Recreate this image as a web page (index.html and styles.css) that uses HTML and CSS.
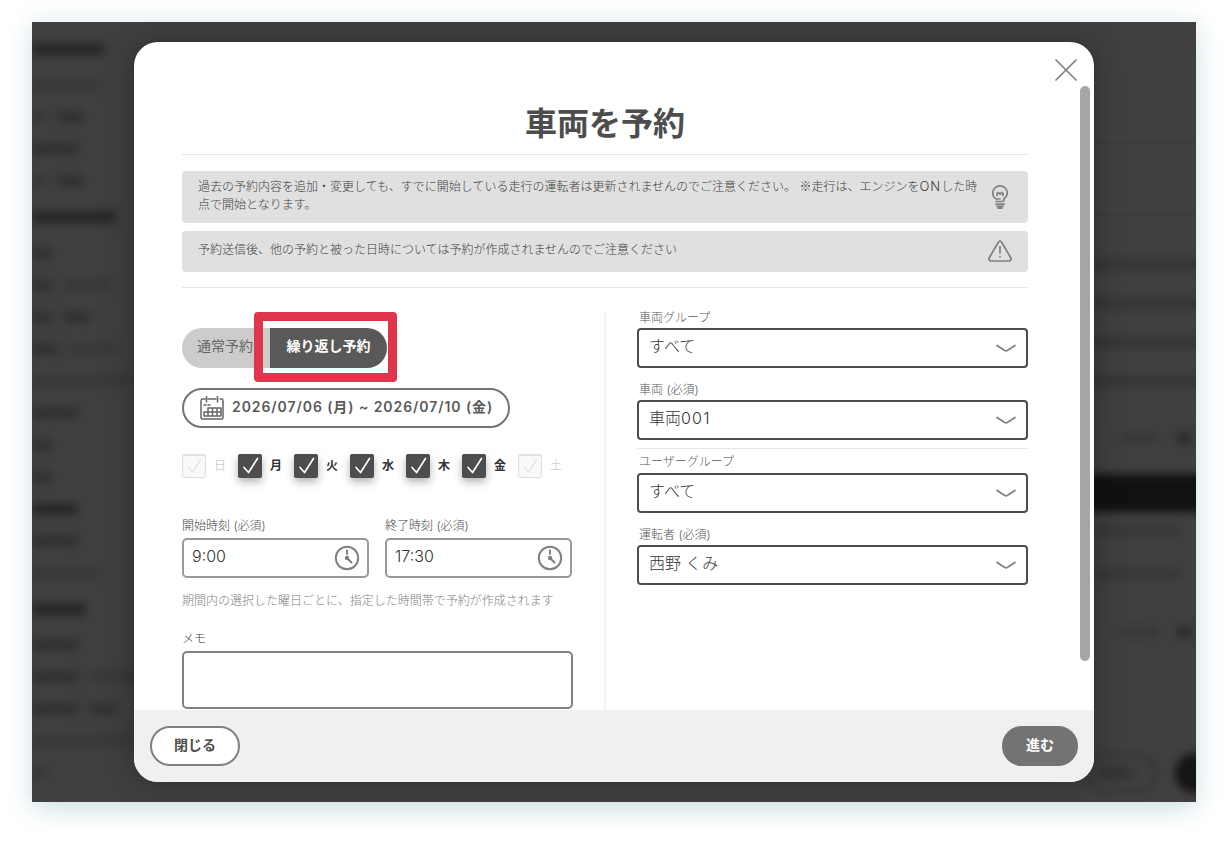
FILE: index.html
```html
<!DOCTYPE html>
<html lang="ja">
<head>
    <meta charset="UTF-8">
    <meta name="viewport" content="width=device-width, initial-scale=1.0">
    <title>車両を予約</title>
    <link rel="stylesheet" href="styles.css">
</head>
<body>
    <div class="screen">

        <!-- Blurred page behind the dialog -->
        <div class="backdrop">
            <div class="side">
                <div class="head"><i class="w72"></i></div>
                <div class="item pale"><i class="w66"></i></div>
                <div class="item"><i class="w14 thin"></i><i class="w26"></i></div>
                <div class="item"><i class="w46"></i></div>
                <div class="item"><i class="w14 thin"></i><i class="w26"></i></div>
                <div class="head"><i class="w84"></i></div>
                <div class="item"><i class="w20"></i></div>
                <div class="item"><i class="w20"></i><i class="w46 thin"></i></div>
                <div class="item"><i class="w20"></i><i class="w26"></i></div>
                <div class="item"><i class="w26"></i><i class="w46 thin"></i></div>
                <div class="item pale"><i class="w100"></i></div>
                <div class="item"><i class="w46"></i></div>
                <div class="item"><i class="w20"></i></div>
                <div class="item"><i class="w20"></i></div>
                <div class="item dark"><i class="w46"></i></div>
                <div class="item"><i class="w46"></i></div>
                <div class="item pale"><i class="w66"></i></div>
                <div class="head"><i class="w54"></i></div>
                <div class="item"><i class="w46"></i></div>
                <div class="item"><i class="w46"></i><i class="w46 thin"></i></div>
                <div class="item"><i class="w46"></i><i class="w26"></i></div>
                <div class="item pale"><i class="w100"></i></div>
                <div class="item pale"><i class="w14"></i></div>
            </div>
            <div class="page">
                <div class="line"></div>
                <div class="line second"></div>
                <div class="rows"><i></i><i></i><i></i><i></i></div>
                <div class="cells"><i class="w36"></i><i class="w14 dot"></i></div>
                <div class="band"></div>
                <div class="cells pale"><i class="w84"></i></div>
                <div class="cells pale"><i class="w84"></i></div>
                <div class="cells last"><i class="w36"></i><i class="w14 dot"></i></div>
                <div class="actions"><span class="outline"><i class="w36"></i></span><span class="solid"></span></div>
            </div>
        </div>
        <div class="shade"></div>

        <!-- Dialog -->
        <div class="modal">
            <button class="close" aria-label="閉じる">
                <svg width="24" height="24" viewBox="0 0 24 24"><path d="M2 2L22 22M22 2L2 22"/></svg>
            </button>
            <div class="scrollbar"></div>

            <div class="content">
                <h1>車両を予約</h1>

                <div class="notices">
                    <div class="notice">
                        <p>過去の予約内容を追加・変更しても、すでに開始している走行の運転者は更新されませんのでご注意ください。 <span class="kome">※</span>走行は、エンジンを<span class="on">ON</span>した時<br>点で開始となります。</p>
                        <svg class="bulb" width="24" height="26" viewBox="0 0 24 26">
                            <path d="M8 17.500h6.500q1.500 0 1.500-1.500v-1.500c2-1.200 3.200-3.200 3.200-5.500a7.200 7.200 0 0 0-14.400 0c0 3 1.200 5 3.700 6h3.500"/>
                            <path d="M9 11.500v-2l1.500-1 1.500 1.800 1.500-1.800 1.500 1v2"/>
                            <path d="M8 20.200h8M9 22.300h6M10.300 24.200h3.400"/>
                        </svg>
                    </div>
                    <div class="notice small">
                        <p>予約送信後、他の予約と被った日時については予約が作成されませんのでご注意ください</p>
                        <svg width="24" height="24" viewBox="0 0 24 24">
                            <path d="M10.300 2.200L1.300 17.700c-.8 1.600 0 3.300 1.800 3.300h17.800c1.800 0 2.600-1.700 1.800-3.300L13.700 2.200c-.8-1.500-2.600-1.500-3.400 0z"/>
                            <path class="mark" d="M12 6v7.500M12 15.800v1.700"/>
                        </svg>
                    </div>
                </div>

                <div class="columns">
                    <div class="left">
                        <div class="toggle">
                            <span class="normal">通常予約</span>
                            <span class="repeat">繰り返し予約</span>
                            <div class="highlight"></div>
                        </div>

                        <div class="period">
                            <svg width="24" height="24" viewBox="0 0 24 24">
                                <path d="M5 3H2.500Q1 3 1 4.500v17Q1 23 2.500 23h19q1.500 0 1.500-1.500v-17Q23 3 21.500 3H20M8 3h8M6.500 0v6M17.500 0v6M4 9h2M8 9h2"/>
                                <path d="M8 12h13v8H4v-4h17M8 12v8M12.500 12v8M17 12v8"/>
                            </svg>
                            <span>2026/07/06 (月) ~ 2026/07/10 (金)</span>
                        </div>

                        <div class="days">
                            <label class="day off"><span class="check"><svg viewBox="0 0 24 24"><path d="M6 13.500L10.500 18.500L19.500 4.500"/></svg></span>日</label>
                            <label class="day"><span class="check"><svg viewBox="0 0 24 24"><path d="M6 13.500L10.500 18.500L19.500 4.500"/></svg></span>月</label>
                            <label class="day"><span class="check"><svg viewBox="0 0 24 24"><path d="M6 13.500L10.500 18.500L19.500 4.500"/></svg></span>火</label>
                            <label class="day"><span class="check"><svg viewBox="0 0 24 24"><path d="M6 13.500L10.500 18.500L19.500 4.500"/></svg></span>水</label>
                            <label class="day"><span class="check"><svg viewBox="0 0 24 24"><path d="M6 13.500L10.500 18.500L19.500 4.500"/></svg></span>木</label>
                            <label class="day"><span class="check"><svg viewBox="0 0 24 24"><path d="M6 13.500L10.500 18.500L19.500 4.500"/></svg></span>金</label>
                            <label class="day off"><span class="check"><svg viewBox="0 0 24 24"><path d="M6 13.500L10.500 18.500L19.500 4.500"/></svg></span>土</label>
                        </div>

                        <div class="times">
                            <div class="field">
                                <label>開始時刻 <small>(必須)</small></label>
                                <div class="box time">
                                    <span>9:00</span>
                                    <svg width="26" height="26" viewBox="0 0 26 26"><circle cx="13" cy="13" r="11.200"/><path d="M13 5.500v3.500M13 13l4.500 4.500"/><circle class="hub" cx="13" cy="13" r="2.200"/></svg>
                                </div>
                            </div>
                            <div class="field">
                                <label>終了時刻 <small>(必須)</small></label>
                                <div class="box time">
                                    <span>17:30</span>
                                    <svg width="26" height="26" viewBox="0 0 26 26"><circle cx="13" cy="13" r="11.200"/><path d="M13 5.500v3.500M13 13l4.500 4.500"/><circle class="hub" cx="13" cy="13" r="2.200"/></svg>
                                </div>
                            </div>
                        </div>

                        <p class="hint">期間内の選択した曜日ごとに、指定した時間帯で予約が作成されます</p>

                        <div class="field memo">
                            <label for="memo">メモ</label>
                            <textarea id="memo"></textarea>
                        </div>
                    </div>

                    <div class="right">
                        <div class="field">
                            <label>車両グループ</label>
                            <div class="box select"><span>すべて</span><svg width="20" height="10" viewBox="0 0 20 10"><path d="M1 2.500L8.800 7.500Q10 8.200 11.200 7.500L19 2.500"/></svg></div>
                        </div>
                        <div class="field">
                            <label>車両 <small>(必須)</small></label>
                            <div class="box select"><span>車両<b>001</b></span><svg width="20" height="10" viewBox="0 0 20 10"><path d="M1 2.500L8.800 7.500Q10 8.200 11.200 7.500L19 2.500"/></svg></div>
                        </div>
                        <div class="field ruled">
                            <label>ユーザーグループ</label>
                            <div class="box select"><span>すべて</span><svg width="20" height="10" viewBox="0 0 20 10"><path d="M1 2.500L8.800 7.500Q10 8.200 11.200 7.500L19 2.500"/></svg></div>
                        </div>
                        <div class="field">
                            <label>運転者 <small>(必須)</small></label>
                            <div class="box select"><span>西野 くみ</span><svg width="20" height="10" viewBox="0 0 20 10"><path d="M1 2.500L8.800 7.500Q10 8.200 11.200 7.500L19 2.500"/></svg></div>
                        </div>
                    </div>
                </div>
            </div>

            <div class="footer">
                <button class="cancel">閉じる</button>
                <button class="next">進む</button>
            </div>
        </div>
    </div>
</body>
</html>
```
FILE: styles.css
```css
* {
    box-sizing: border-box;
}
body {
    margin: 0;
    padding: 22px 32px 42px;
    background: white;
    color: #404040;
    font-family: Inter, "Noto Sans CJK JP", sans-serif;
    font-size: 12px;
    font-weight: 300;
    line-height: 18px;
}
h1, p {
    margin: 0;
}
button {
    font-family: inherit;
}
svg {
    display: block;
    flex: none;
    fill: none;
    stroke: #808080;
    stroke-width: 1.7;
    stroke-linecap: round;
    stroke-linejoin: round;
}
.screen {
    position: relative;
    width: 1164px;
    height: 780px;
    padding: 20px 102px;
    box-shadow: 0 0 24px rgba(120, 170, 190, 0.22), 0 12px 24px -4px rgba(120, 175, 185, 0.25);
}

/* page behind the dialog */
.backdrop {
    position: absolute;
    inset: 0;
    display: flex;
    overflow: hidden;
    background: #404040;
}
.backdrop i {
    display: block;
    height: 10px;
    background: #2e2e2e;
    filter: blur(5px);
}
.backdrop .thin, .backdrop .pale i {
    background: #363636;
}
.backdrop .dark i {
    background: #222;
}
.side {
    flex: none;
    width: 133px;
    padding-top: 7px;
    overflow: hidden;
}
.head, .item {
    display: flex;
    align-items: center;
    gap: 12px;
    height: 32px;
}
.head {
    height: 40px;
}
.head i {
    height: 12px;
    background: #252525;
}
.w14 { width: 14px; }
.w20 { width: 20px; }
.w26 { width: 26px; }
.w36 { width: 36px; }
.w46 { width: 46px; }
.w54 { width: 54px; }
.w66 { width: 66px; }
.w72 { width: 72px; }
.w84 { width: 84px; }
.w100 { width: 100px; }
.page {
    flex: 1;
    padding: 119px 0 0 920px;
}
.line {
    height: 2px;
    margin-bottom: 70px;
    background: #3c3c3c;
}
.second {
    margin-bottom: 45px;
}
.rows {
    display: flex;
    flex-direction: column;
    gap: 30px;
}
.rows i {
    height: 9px;
    background: #323232;
}
.cells {
    display: flex;
    align-items: center;
    gap: 20px;
    height: 43px;
    padding-left: 36px;
}
.rows + .cells {
    height: 40px;
    margin-top: 32px;
}
.cells.pale {
    padding-left: 10px;
}
.cells i {
    flex: none;
    background: #373737;
}
.cells .dot {
    background: #262626;
}
.band {
    height: 38px;
    margin: 16px -20px 0 0;
    background: #111;
    filter: blur(4px);
}
.band + .pale {
    margin-top: -3px;
}
.cells.last {
    margin-top: 15px;
}
.actions {
    display: flex;
    gap: 18px;
    margin-top: 100px;
}
.outline {
    display: flex;
    flex: none;
    align-items: center;
    width: 72px;
    height: 40px;
    padding-left: 8px;
    border: 3px solid #343434;
    border-radius: 20px;
    filter: blur(3px);
}
.solid {
    flex: none;
    width: 60px;
    height: 40px;
    border-radius: 20px;
    background: #151515;
    filter: blur(4px);
}
.shade {
    position: absolute;
    inset: 0;
    overflow: hidden;
}
.shade::before {
    content: "";
    position: absolute;
    inset: 20px 102px;
    border-radius: 24px;
    box-shadow: 0 0 32px rgba(0, 0, 0, 0.3);
}

/* dialog */
.modal {
    position: relative;
    display: flex;
    flex-direction: column;
    width: 960px;
    height: 740px;
    overflow: hidden;
    border-radius: 24px;
    background: white;
}
.close {
    position: absolute;
    top: 16px;
    right: 16px;
    padding: 0;
    border: none;
    background: none;
}
.scrollbar {
    position: absolute;
    top: 44px;
    right: 4px;
    width: 10px;
    height: 575px;
    border-radius: 5px;
    background: #a6a6a6;
}
.content {
    height: 668px;
    padding: 56px 66px 0 48px;
    overflow: hidden;
}
h1 {
    height: 57px;
    border-bottom: 1px solid #e6e6e6;
    color: #4d4d4d;
    font-size: 32px;
    font-weight: 700;
    line-height: 51px;
    text-align: center;
}
.notices {
    display: flex;
    flex-direction: column;
    gap: 8px;
    height: 133px;
    padding-top: 16px;
    border-bottom: 1px solid #e6e6e6;
}
.notice {
    display: flex;
    align-items: center;
    justify-content: space-between;
    height: 52px;
    padding: 0 16px;
    border-radius: 4px;
    background: #e0e0e0;
}
.notice p {
    padding-bottom: 3px;
    white-space: nowrap;
}
.kome {
    font-family: "Noto Sans CJK JP", sans-serif;
}
.on {
    font-size: 13px;
    letter-spacing: 1px;
}
.notice.small {
    height: 41px;
}
.mark {
    stroke-linecap: butt;
}
.columns {
    display: flex;
    gap: 32px;
    padding-top: 24px;
}
.left {
    flex: none;
    width: 390px;
    padding-top: 16px;
}
.right {
    flex: 1;
    height: 410px;
    padding-left: 31px;
    border-left: 2px solid #f2f2f2;
}

/* normal / repeat switch */
.toggle {
    position: relative;
    display: flex;
    width: 205px;
    height: 40px;
    border-radius: 20px;
    font-size: 14px;
    line-height: 36px;
}
.normal {
    width: 88px;
    padding-left: 15px;
    border-radius: 20px 0 0 20px;
    background: #ccc;
    color: #666;
    font-weight: 400;
}
.repeat {
    flex: 1;
    border-radius: 0 20px 20px 0;
    background: #595959;
    color: white;
    font-weight: 700;
    text-align: center;
}
.highlight {
    position: absolute;
    top: -16px;
    left: 72px;
    width: 143px;
    height: 70px;
    border: 9px solid #e0364b;
    border-radius: 4px;
}
.period {
    display: flex;
    align-items: center;
    gap: 8px;
    width: 328px;
    height: 40px;
    margin-top: 20px;
    padding-left: 16px;
    border: 2px solid #737373;
    border-radius: 20px;
    color: #595959;
    font-size: 14px;
    font-weight: 600;
    letter-spacing: 0.93px;
    white-space: nowrap;
}
.period svg {
    stroke: #666;
    stroke-width: 1.5;
}
.period span {
    padding-bottom: 2px;
}
.days {
    display: flex;
    margin-top: 26px;
}
.day {
    display: flex;
    flex: none;
    gap: 8px;
    width: 56px;
    height: 24px;
    color: #333;
    font-weight: 700;
    line-height: 23px;
}
.check {
    width: 24px;
    height: 24px;
    border-radius: 2px;
    background: #4d4d4d;
    box-shadow: 0 4px 8px rgba(0, 0, 0, 0.3);
}
.check svg {
    stroke: white;
}
.off {
    color: #bfbfbf;
    font-weight: 300;
}
.off .check {
    border: 1px solid #e0e0e0;
    background: #fafafa;
    box-shadow: inset 0 1px 1px #e0e0e0;
}
.off .check svg {
    stroke: #e6e6e6;
}

/* form fields */
.field label {
    display: block;
    height: 22px;
    line-height: 20px;
}
.field small {
    color: #595959;
    font-size: 12px;
}
.box {
    display: flex;
    align-items: center;
    justify-content: space-between;
    height: 40px;
    border: 2px solid #4d4d4d;
    border-radius: 4px;
    color: #333;
    font-size: 16px;
    white-space: nowrap;
}
.box span {
    padding-bottom: 4px;
}
.box b {
    font-weight: 300;
    letter-spacing: 1.2px;
}
.times {
    display: flex;
    gap: 16px;
    margin-top: 38px;
}
.times .field {
    flex: 1;
}
.time {
    padding: 0 7px 0 8px;
    border-color: #999;
    border-radius: 5px;
}
.time svg {
    stroke-width: 2;
}
.time .hub {
    fill: #808080;
    stroke: none;
}
.hint {
    margin-top: 14px;
    color: #808080;
    white-space: nowrap;
}
.memo {
    margin-top: 19px;
}
textarea {
    display: block;
    width: 391px;
    height: 58px;
    border: 2px solid #808080;
    border-radius: 5px;
    resize: none;
}
.right .field {
    height: 72px;
}
.right .field:first-child {
    margin-top: -6px;
}
.right .field label {
    padding-left: 2px;
    color: #595959;
    line-height: 23px;
}
.right .ruled {
    height: 75px;
    margin-top: -2px;
    padding-top: 3px;
    border-top: 1px solid #e6e6e6;
}
.right .ruled label {
    height: 21px;
    line-height: 20px;
}
.select {
    padding: 0 10px;
}

.footer {
    display: flex;
    align-items: center;
    justify-content: space-between;
    height: 72px;
    padding: 0 16px;
    background: #f0f0f0;
}
.cancel, .next {
    width: 90px;
    height: 40px;
    padding: 0 0 4px;
    border: 2px solid #808080;
    border-radius: 20px;
    background: white;
    color: #4d4d4d;
    font-size: 14px;
    font-weight: 700;
}
.next {
    width: 76px;
    border-color: #737373;
    background: #737373;
    color: white;
}
```
